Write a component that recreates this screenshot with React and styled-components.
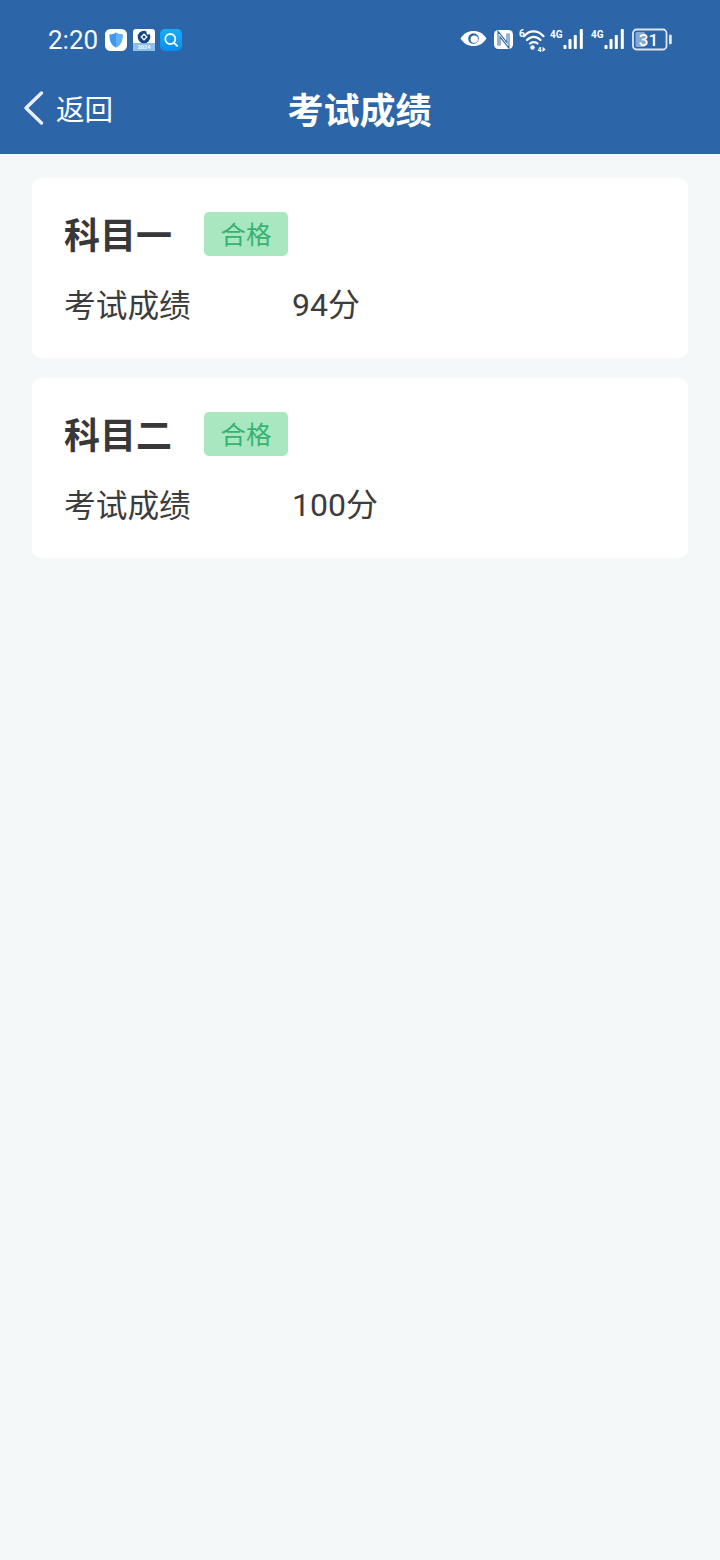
import React from "react";
import styled, { createGlobalStyle } from "styled-components";

const Global = createGlobalStyle`
  html, body { margin: 0; padding: 0; background: #f4f8f9; }
  body { font-family: "Roboto", "Noto Sans CJK SC", sans-serif; }
`;
const Page = styled.div`
  width: 720px; min-height: 1560px; background: #f4f8f9; display: flex; flex-direction: column;
`;
const Header = styled.header`
  height: 154px; background: #2c66a8; color: #fff; display: flex; flex-direction: column;
`;
const StatusBar = styled.div`
  height: 80px; padding: 0 48px; display: flex; align-items: center; justify-content: space-between; box-sizing: border-box;
`;
const StatusLeft = styled.div`display: flex; align-items: center; gap: 5.5px;`;
const StatusRight = styled.div`display: flex; align-items: center; gap: 7px;`;
const Time = styled.span`
  width: 50px; margin-right: 1.5px; font: 400 26px/1 "Roboto", sans-serif; opacity: .97;
`;
const NavBar = styled.nav`
  height: 74px; margin-top: -9px; position: relative; display: flex; align-items: center; justify-content: center;
`;
const Back = styled.div`
  position: absolute; left: 22px; top: 50%; transform: translateY(-50%); display: flex; align-items: center; gap: 12px;
  font: 400 28.5px/1 "Noto Sans CJK SC", sans-serif;
`;
const Title = styled.h1`
  margin: 0 1px 0 0; font: 700 36px/1 "Noto Sans CJK SC", sans-serif; color: #fff;
`;
const List = styled.main`
  padding: 24px 32px; display: flex; flex-direction: column; gap: 20px;
`;
const Card = styled.section`
  height: 180px; box-sizing: border-box; background: #fff; border-radius: 10px; padding: 34px 32px 0;
`;
const CardHead = styled.div`display: flex; align-items: center; height: 44px;`;
const Subject = styled.h2`
  margin: 0 0 2px; width: 140px; flex: none; font: 700 36px/44px "Noto Sans CJK SC", sans-serif; color: #383838; white-space: nowrap;
`;
const Tag = styled.span`
  width: 84px; height: 44px; padding-bottom: 2px; box-sizing: border-box; border-radius: 5px; background: #a9e7c0; color: #38b273;
  display: flex; align-items: center; justify-content: center;
  font: 400 25.5px/1 "Noto Sans CJK SC", sans-serif;
`;
const Row = styled.div`
  margin-top: 25px; display: flex; align-items: center; height: 44px; color: #3c3c3c;
  font: 400 31.7px/44px "Noto Sans CJK SC", sans-serif;
`;
const Label = styled.span`width: 228px; flex: none;`;
const Value = styled.span`
  padding-top: 4px; font-family: "Roboto", "Noto Sans CJK SC", sans-serif; font-size: 32px;
`;
const IconSvg = styled.svg`display: block; flex: none;`;
const WifiSvg = styled(IconSvg)`margin: 0 -3px 0 -1px;`;

const ShieldIcon = () => (
  <IconSvg width="22" height="22" viewBox="0 0 22 22">
    <rect width="22" height="22" rx="5.500" fill="#fff" />
    <path d="M11 3.500c2 1.400 4.200 1.900 6.500 2 .3 5.800-1.300 10.300-6.500 13C5.800 15.800 4.200 11.300 4.500 5.500c2.300-.1 4.500-.6 6.500-2z" fill="#3f97f2" />
    <path d="M11 3.500c2 1.400 4.200 1.900 6.500 2 .3 5.800-1.300 10.300-6.500 13z" fill="#5fb0f6" />
  </IconSvg>
);
const BankIcon = () => (
  <IconSvg width="22" height="22" viewBox="0 0 22 22">
    <rect width="22" height="22" rx="3" fill="#fff" />
    <rect y="14" width="22" height="8" fill="#8cc0ea" />
    <circle cx="11" cy="8" r="6.300" fill="#17457f" />
    <path d="M11 4.300 14.700 8 11 11.700 7.300 8z" fill="#fff" />
    <circle cx="11" cy="8" r="1.500" fill="#17457f" />
    <path d="M13 1.500h4.500v3.500l-3.500.8z" fill="#fff" />
    <text x="11" y="20" textAnchor="middle" fontFamily="Roboto, sans-serif" fontWeight="700" fontSize="5.500" fill="#f2f8fd">2024</text>
  </IconSvg>
);
const SearchIcon = () => (
  <IconSvg width="22" height="22" viewBox="0 0 22 22">
    <defs>
      <linearGradient id="searchBg" x1="0" y1="0" x2="0" y2="1">
        <stop offset="0" stopColor="#16aef8" />
        <stop offset="1" stopColor="#0b8cf0" />
      </linearGradient>
    </defs>
    <rect width="22" height="22" rx="5" fill="url(#searchBg)" />
    <circle cx="10.300" cy="10" r="5" fill="none" stroke="#fff" strokeWidth="1.800" />
    <path d="m14 13.800 3.200 3" stroke="#fff" strokeWidth="1.800" strokeLinecap="round" />
  </IconSvg>
);
const EyeIcon = () => (
  <IconSvg width="27" height="24" viewBox="0 0 27 24">
    <path d="M.5 10.500C3.800 5.300 8 3 13.500 3s9.700 2.300 13 7.500c-3.300 5.200-7.500 7.500-13 7.500S3.800 15.700.5 10.500z" fill="#fff" />
    <path d="M13.500 5.200a5.300 5.300 0 1 1 0 10.600 5.300 5.300 0 0 1 0-10.600z" fill="#2c66a8" />
    <circle cx="14.300" cy="11.300" r="3.700" fill="#fff" />
  </IconSvg>
);
const NfcIcon = () => (
  <IconSvg width="19" height="24" viewBox="0 0 19 24">
    <rect y="2" width="19" height="19" rx="4.500" fill="#fff" />
    <path d="M5 17.500V6l9 11.500V5.500" fill="none" stroke="#2c66a8" strokeWidth="3" />
    <path d="M5 17.500V6l9 11.500V5.500" fill="none" stroke="#fff" strokeWidth="1" />
  </IconSvg>
);
const WifiIcon = () => (
  <WifiSvg width="27" height="24" viewBox="0 0 27 24">
    <text x="0" y="9" fontFamily="Roboto, sans-serif" fontWeight="700" fontSize="10" fill="#fff">6</text>
    <g fill="none" stroke="#fff" strokeWidth="2.300" strokeLinecap="round">
      <path d="M5 8.200C10.500 1.800 18.500 1.800 24.500 8.200" />
      <path d="M8 12C12 7.800 17.500 7.800 21.500 12" />
      <path d="M11 15.500C13 13.600 16.500 13.600 18.500 15.500" />
    </g>
    <circle cx="13.500" cy="19.500" r="2.200" fill="#fff" />
    <text x="18.500" y="23.500" fontFamily="Roboto, sans-serif" fontWeight="700" fontSize="7" fill="#fff">4</text>
    <path d="m23.500 18.800 3.200 2.600-3.200 2.600z" fill="#fff" />
  </WifiSvg>
);
const SignalIcon = () => (
  <IconSvg width="34" height="24" viewBox="0 0 34 24">
    <text x="0" y="9.500" fontFamily="Roboto, sans-serif" fontWeight="700" fontSize="10" fill="#fff">4G</text>
    <g fill="#fff">
      <rect x="13.500" y="17" width="3" height="4" rx=".8" />
      <rect x="18.500" y="11" width="3" height="10" rx=".8" />
      <rect x="23.800" y="7" width="3" height="14" rx=".8" />
      <rect x="29.800" y="1" width="3" height="20" rx=".8" />
    </g>
  </IconSvg>
);
const BatteryIcon = () => (
  <IconSvg width="40" height="24" viewBox="0 0 40 24">
    <rect x="1" y="1.500" width="33.500" height="20" rx="3.500" fill="none" stroke="#dbe6f2" strokeWidth="1.800" />
    <rect x="3.500" y="4" width="9.500" height="15" rx="1.500" fill="#86aad3" />
    <text x="16.500" y="17.500" textAnchor="middle" fontFamily="Roboto, sans-serif" fontWeight="500" fontSize="17" fill="#fff">31</text>
    <rect x="37" y="6.500" width="2.800" height="10" rx="1.400" fill="#dbe6f2" />
  </IconSvg>
);
const BackIcon = () => (
  <IconSvg width="22" height="36" viewBox="0 0 22 36">
    <path d="M19.500 3 4 18l15.500 15" fill="none" stroke="#e9f0f7" strokeWidth="3.400" strokeLinecap="round" strokeLinejoin="round" />
  </IconSvg>
);

const results = [
  { subject: "科目一", score: "94分" },
  { subject: "科目二", score: "100分" },
];

export default function App() {
  return (
    <Page>
      <Global />
      <Header>
        <StatusBar>
          <StatusLeft>
            <Time>2:20</Time>
            <ShieldIcon />
            <BankIcon />
            <SearchIcon />
          </StatusLeft>
          <StatusRight>
            <EyeIcon />
            <NfcIcon />
            <WifiIcon />
            <SignalIcon />
            <SignalIcon />
            <BatteryIcon />
          </StatusRight>
        </StatusBar>
        <NavBar>
          <Back>
            <BackIcon />
            <span>返回</span>
          </Back>
          <Title>考试成绩</Title>
        </NavBar>
      </Header>
      <List>
        {results.map((r) => (
          <Card key={r.subject}>
            <CardHead>
              <Subject>{r.subject}</Subject>
              <Tag>合格</Tag>
            </CardHead>
            <Row>
              <Label>考试成绩</Label>
              <Value>{r.score}</Value>
            </Row>
          </Card>
        ))}
      </List>
    </Page>
  );
}
